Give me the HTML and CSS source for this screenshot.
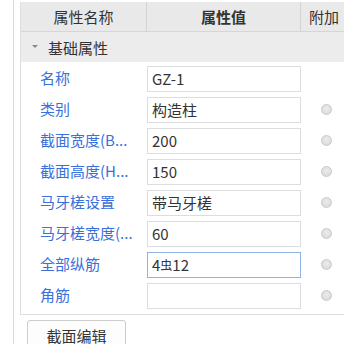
FILE: index.html
```html
<!DOCTYPE html>
<html>
<head>
<meta charset="utf-8">
<link rel="stylesheet" href="styles.css">
</head>
<body>
<div class="frame">
  <div class="panel">
    <div class="head">
      <div class="hc c1">属性名称</div>
      <div class="hc c2 bold">属性值</div>
      <div class="hc c3">附加</div>
    </div>
    <div class="group"><span class="tri"></span><span>基础属性</span></div>
    <div class="rows">
      <div class="row"><div class="lab">名称</div><div class="val"><div class="inp">GZ-1</div></div><div class="add"></div></div>
      <div class="row"><div class="lab">类别</div><div class="val"><div class="inp">构造柱</div></div><div class="add"><span class="radio"></span></div></div>
      <div class="row"><div class="lab">截面宽度(B...</div><div class="val"><div class="inp">200</div></div><div class="add"><span class="radio"></span></div></div>
      <div class="row"><div class="lab">截面高度(H...</div><div class="val"><div class="inp">150</div></div><div class="add"><span class="radio"></span></div></div>
      <div class="row"><div class="lab">马牙槎设置</div><div class="val"><div class="inp">带马牙槎</div></div><div class="add"><span class="radio"></span></div></div>
      <div class="row"><div class="lab">马牙槎宽度(...</div><div class="val"><div class="inp">60</div></div><div class="add"><span class="radio"></span></div></div>
      <div class="row"><div class="lab">全部纵筋</div><div class="val"><div class="inp focus">4<span class="sym">虫</span>12</div></div><div class="add"><span class="radio"></span></div></div>
      <div class="row"><div class="lab">角筋</div><div class="val"><div class="inp"></div></div><div class="add"><span class="radio"></span></div></div>
    </div>
  </div>
  <div class="btn">截面编辑</div>
</div>
</body>
</html>
```
FILE: styles.css
```css
html, body {
  margin: 0;
  padding: 0;
  background: #ffffff;
  overflow: hidden;
}
body {
  font-family: "Noto Sans CJK SC", "Microsoft YaHei", sans-serif;
  font-size: 15px;
  color: #333333;
}
.frame {
  margin-left: 13px;
  border-left: 1px solid #dadada;
  height: 344px;
  padding-left: 6px;
  padding-top: 2px;
  box-sizing: border-box;
}
.panel {
  border-left: 1px solid #dedede;
  border-bottom: 1px solid #dedede;
  padding-bottom: 4px;
}
.head {
  display: grid;
  grid-template-columns: 126px 154px 1fr;
  height: 29px;
  background: #e9e9e9;
  border-bottom: 1px solid #d6d6d6;
}
.hc {
  display: flex;
  align-items: center;
  line-height: 29px;
  color: #333;
  white-space: nowrap;
}
.c1, .c2 {
  justify-content: center;
  border-right: 1px solid #d4d4d4;
}
.c3 {
  padding-left: 8px;
}
.bold {
  font-weight: bold;
}
.group {
  height: 30px;
  background: #ececec;
  display: flex;
  align-items: center;
  padding-left: 11px;
  gap: 10px;
}
.tri {
  width: 0;
  height: 0;
  border-left: 3px solid transparent;
  border-right: 3px solid transparent;
  border-top: 3px solid #8a8a8a;
  margin-top: -1px;
}
.rows {
  display: flex;
  flex-direction: column;
}
.row {
  display: grid;
  grid-template-columns: 126px 154px 1fr;
  height: 31px;
}
.lab {
  color: #3a6fdc;
  padding-left: 19px;
  line-height: 31px;
  white-space: nowrap;
  overflow: hidden;
}
.val {
  padding-top: 4px;
}
.inp {
  box-sizing: border-box;
  height: 26px;
  border: 1px solid #dddddd;
  padding-left: 4px;
  line-height: 24px;
  color: #333;
}
.inp.focus {
  border-color: #8fb2e6;
}
.sym {
  font-size: 12px;
  position: relative;
  top: -1px;
}
.add {
  display: flex;
  align-items: center;
  padding-left: 20px;
}
.radio {
  width: 9px;
  height: 9px;
  border-radius: 50%;
  border: 1px solid #c9c9c9;
  background: radial-gradient(circle at 50% 40%, #ececec, #d6d6d6);
  margin-top: 1px;
}
.btn {
  margin-top: 5px;
  margin-left: 7px;
  width: 99px;
  height: 30px;
  box-sizing: border-box;
  border: 1px solid #cccccc;
  border-radius: 3px;
  text-align: center;
  line-height: 30px;
  color: #333;
  background: #fdfdfd;
}
```
